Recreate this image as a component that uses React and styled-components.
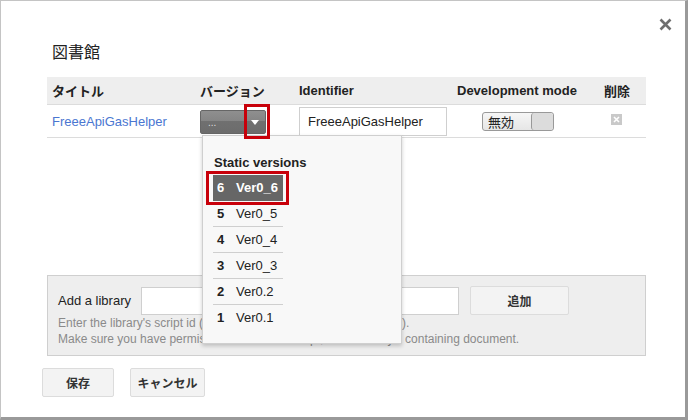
import React, { useState } from "react";
import styled, { createGlobalStyle } from "styled-components";

const GlobalStyle = createGlobalStyle`
  html, body {
    margin: 0;
    padding: 0;
    background: #fff;
  }
  body {
    font-family: "Liberation Sans", Arial, "Noto Sans CJK JP", sans-serif;
    color: #222;
  }
`;

const Dialog = styled.div`
  position: relative;
  box-sizing: border-box;
  width: 688px;
  height: 420px;
  border-top: 1px solid #c4c4c4;
  border-left: 1px solid #c4c4c4;
  border-right: 3px solid #9a9a9a;
  border-bottom: 3px solid #9a9a9a;
  padding: 40px 39px 0 46px;
  background: #fff;
`;

const Close = styled.button`
  position: absolute;
  top: 17px;
  right: 12px;
  width: 14px;
  height: 14px;
  padding: 0;
  border: 0;
  background: none;
  cursor: pointer;
  display: flex;
`;

const Title = styled.div`
  font-size: 16px;
  line-height: 24px;
  padding-left: 5px;
  margin-bottom: 12px;
  color: #222;
`;

const Table = styled.div`
  width: 599px;
`;

const Row = styled.div`
  display: grid;
  grid-template-columns: 148px 99px 158px 147px 47px;
  align-items: center;
  height: ${(p) => (p.$head ? "27px" : "32px")};
  background: ${(p) => (p.$head ? "#eeeeee" : "transparent")};
  border-bottom: 1px solid #dcdcdc;
  font-size: 13px;
  font-weight: ${(p) => (p.$head ? "bold" : "normal")};
`;

const Cell = styled.div`
  position: relative;
  padding-left: ${(p) => p.$pad ?? 5}px;
  height: 100%;
  display: flex;
  align-items: center;
  white-space: nowrap;
`;

const Link = styled.a`
  color: #4a76d1;
  text-decoration: none;
  font-size: 13px;
  cursor: pointer;
`;

const VersionButton = styled.div`
  box-sizing: border-box;
  width: 66px;
  height: 24px;
  margin-top: 2px;
  border: 1px solid #666;
  border-radius: 2px;
  background: linear-gradient(#8f8f8f 0%, #858585 45%, #707070 46%, #6c6c6c 100%);
  display: flex;
  align-items: center;
  justify-content: space-between;
  padding: 0 6px 0 7px;
  color: #ddd;
  font-size: 10px;
  cursor: pointer;
`;

const Arrow = styled.span`
  width: 0;
  height: 0;
  border-left: 4px solid transparent;
  border-right: 4px solid transparent;
  border-top: 5px solid #fff;
`;

const Marker = styled.div`
  position: absolute;
  box-sizing: border-box;
  border: 3px solid #c8000a;
  left: ${(p) => p.$x}px;
  top: ${(p) => p.$y}px;
  width: ${(p) => p.$w}px;
  height: ${(p) => p.$h}px;
  pointer-events: none;
  z-index: 3;
`;

const Menu = styled.div`
  position: absolute;
  left: 7px;
  top: 30px;
  box-sizing: border-box;
  width: 200px;
  height: 209px;
  background: #f8f8f8;
  border: 1px solid #cfcfcf;
  box-shadow: 0 2px 4px rgba(0, 0, 0, 0.2);
  padding: 19px 0 0 10px;
  z-index: 2;
`;

const MenuTitle = styled.div`
  font-size: 13px;
  font-weight: bold;
  line-height: 16px;
  color: #222;
  margin-bottom: 4px;
  padding-left: 1px;
`;

const Item = styled.div`
  box-sizing: border-box;
  width: 70px;
  height: 26px;
  display: flex;
  align-items: center;
  gap: 11px;
  padding-left: 4px;
  font-size: 13px;
  background: ${(p) => (p.$active ? "#666" : "transparent")};
  color: ${(p) => (p.$active ? "#fff" : "#222")};
  font-weight: ${(p) => (p.$active ? "bold" : "normal")};
  border-bottom: 1px solid ${(p) => (p.$last || p.$active ? "transparent" : "#cfcfcf")};
  cursor: pointer;

  b {
    font-weight: bold;
    width: 8px;
  }
`;

const MenuItemWrap = styled.div`
  position: relative;
`;

const TextInput = styled.input`
  box-sizing: border-box;
  width: ${(p) => p.$w}px;
  height: ${(p) => p.$h}px;
  border: 1px solid #cfcfcf;
  background: #fff;
  padding: 0 8px;
  font-family: inherit;
  font-size: 13px;
  color: #222;
  outline: none;
`;

const Toggle = styled.div`
  box-sizing: border-box;
  width: 72px;
  height: 19px;
  margin-left: 30px;
  border: 1px solid #999;
  border-radius: 3px;
  background: linear-gradient(#f6f6f6, #e6e6e6);
  display: flex;
  align-items: center;
  overflow: hidden;
  font-size: 13px;
  font-family: "Noto Sans CJK JP", sans-serif;
`;

const ToggleLabel = styled.span`
  flex: 1;
  padding-left: 5px;
  line-height: 17px;
`;

const Knob = styled.span`
  width: 21px;
  height: 100%;
  border-left: 1px solid #999;
  border-radius: 3px;
  background: #dcdcdc;
`;

const Delete = styled.div`
  width: 11px;
  height: 11px;
  margin-left: 12px;
  margin-top: -4px;
  background: #c9c9c9;
  display: flex;
  align-items: center;
  justify-content: center;
`;

const Panel = styled.div`
  box-sizing: border-box;
  width: 599px;
  height: 81px;
  margin-top: 137px;
  background: #eeeeee;
  border: 1px solid #cfcfcf;
  padding: 10px 10px 0 10px;
`;

const PanelRow = styled.div`
  display: flex;
  align-items: center;
  gap: 10px;
`;

const Label = styled.span`
  font-size: 13px;
  color: #222;
  width: 73px;
`;

const Button = styled.button`
  box-sizing: border-box;
  width: ${(p) => p.$w}px;
  height: 29px;
  margin-left: ${(p) => p.$ml ?? 0}px;
  border: 1px solid #dcdcdc;
  border-radius: 2px;
  background: #f3f3f3;
  font-family: "Liberation Sans", Arial, "Noto Sans CJK JP", sans-serif;
  font-size: 12px;
  font-weight: bold;
  color: #333;
  cursor: pointer;
  padding: 0;
`;

const Help = styled.div`
  font-size: 12px;
  line-height: 16px;
  color: #8a8a8a;
  margin-top: 0;
`;

const Footer = styled.div`
  display: flex;
  gap: 16px;
  margin-left: -5px;
  margin-top: 12px;
`;

const versions = [
  ["6", "Ver0_6"],
  ["5", "Ver0_5"],
  ["4", "Ver0_4"],
  ["3", "Ver0_3"],
  ["2", "Ver0.2"],
  ["1", "Ver0.1"],
];

export default function App() {
  const [selected, setSelected] = useState("6");

  return (
    <>
      <GlobalStyle />
      <Dialog>
        <Close aria-label="close">
          <svg width="13" height="13" viewBox="0 0 13 13">
            <path d="M1.5 1.5 L11.5 11.5 M11.5 1.5 L1.5 11.5" stroke="#6e6e6e" strokeWidth="2.6" />
          </svg>
        </Close>
        <Title>図書館</Title>
        <Table>
          <Row $head>
            <Cell>タイトル</Cell>
            <Cell>バージョン</Cell>
            <Cell>Identifier</Cell>
            <Cell>Development mode</Cell>
            <Cell>削除</Cell>
          </Row>
          <Row>
            <Cell>
              <Link>FreeeApiGasHelper</Link>
            </Cell>
            <Cell>
              <VersionButton>
                <span>...</span>
                <Arrow />
              </VersionButton>
              <Marker $x={49} $y={-1} $w={26} $h={35} />
              <Menu>
                <MenuTitle>Static versions</MenuTitle>
                {versions.map(([n, name], i) => (
                  <MenuItemWrap key={n}>
                    <Item
                      $active={selected === n}
                      $last={i === versions.length - 1}
                      onClick={() => setSelected(n)}
                    >
                      <b>{n}</b>
                      <span>{name}</span>
                    </Item>
                    {selected === n && <Marker $x={-7} $y={-4} $w={83} $h={34} />}
                  </MenuItemWrap>
                ))}
              </Menu>
            </Cell>
            <Cell>
              <TextInput $w={148} $h={29} defaultValue="FreeeApiGasHelper" />
            </Cell>
            <Cell $pad={0}>
              <Toggle>
                <ToggleLabel>無効</ToggleLabel>
                <Knob />
              </Toggle>
            </Cell>
            <Cell $pad={0}>
              <Delete>
                <svg width="7" height="7" viewBox="0 0 7 7">
                  <path d="M1 1 L6 6 M6 1 L1 6" stroke="#fff" strokeWidth="1.6" />
                </svg>
              </Delete>
            </Cell>
          </Row>
        </Table>
        <Panel>
          <PanelRow>
            <Label>Add a library</Label>
            <TextInput $w={318} $h={28} />
            <Button $w={99} $ml={1}>追加</Button>
          </PanelRow>
          <Help>
            Enter the library's script id (found in the script's project properties).
            <br />
            Make sure you have permission to view the script, or the library's containing document.
          </Help>
        </Panel>
        <Footer>
          <Button $w={72}>保存</Button>
          <Button $w={75}>キャンセル</Button>
        </Footer>
      </Dialog>
    </>
  );
}
